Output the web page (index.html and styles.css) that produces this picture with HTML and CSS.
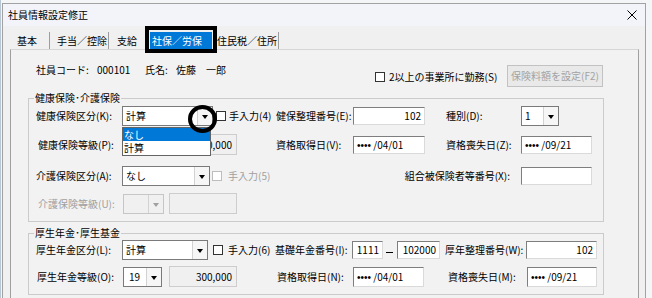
FILE: index.html
```html
<!DOCTYPE html>
<html>
  <head>
    <meta charset="utf-8">
    <meta name="viewport" content="width=device-width, initial-scale=1.0">
    <title>社員情報設定修正</title>
    <link rel="stylesheet" href="styles.css">
  </head>

  <body>
    <div class="window">
      <!-- Title bar -->
      <div class="titlebar">
        <span class="title">社員情報設定修正</span>
        <svg class="close" width="10" height="10" viewBox="0 0 10 10">
          <path d="M0.5 0.5 L9.5 9.5 M9.5 0.5 L0.5 9.5" stroke="#000" stroke-width="1" fill="none"/>
        </svg>
      </div>

      <!-- Tabs -->
      <div class="tabs">
        <div class="tab tab-kihon">基本</div>
        <div class="tab tab-teate">手当／控除</div>
        <div class="tab tab-shikyu">支給</div>
        <div class="tab tab-shaho active">社保／労保<span class="frame"></span></div>
        <div class="tab tab-jumin">住民税／住所</div>
      </div>

      <div class="page">
        <!-- Employee header -->
        <div class="head">
          <div class="emp">
            <span class="emp-code-lbl">社員コード:</span><span class="emp-code">000101</span><span class="emp-name-lbl">氏名:</span><span>佐藤　一郎</span>
          </div>
          <div class="check-wrap"><span class="chk"></span>2以上の事業所に勤務(S)</div>
          <div class="btn disabled">保険料額を設定(F2)</div>
        </div>

        <!-- 健康保険・介護保険 -->
        <fieldset class="group g1">
          <legend>健康保険･介護保険</legend>

          <div class="row r1">
            <span class="lbl">健康保険区分(K):</span>
            <div class="combo w91"><span class="val">計算</span><span class="arrow"></span>
              <div class="popup">
                <div class="opt sel">なし</div>
                <div class="opt">計算</div>
              </div>
              <span class="ring"></span>
            </div>
            <span class="chk ml3"></span>
            <span class="chk-lbl ml3">手入力(4)</span>
            <span class="lbl w77">健保整理番号(E):</span>
            <div class="field w72 num">102</div>
            <span class="lbl w75 ml21">種別(D):</span>
            <div class="combo w38"><span class="val">1</span><span class="arrow"></span></div>
          </div>

          <div class="row r2">
            <span class="lbl ind2">健康保険等級(P):</span>
            <div class="combo w41"><span class="val"></span><span class="arrow"></span></div>
            <div class="box w68 ml6">300,000</div>
            <span class="lbl w77 ml39">資格取得日(V):</span>
            <div class="field w72"><span class="dots">••••</span> /04/01</div>
            <span class="lbl w75 ml21">資格喪失日(Z):</span>
            <div class="field w71"><span class="dots">••••</span> /09/21</div>
          </div>

          <div class="row r3">
            <span class="lbl">介護保険区分(A):</span>
            <div class="combo w88"><span class="val">なし</span><span class="arrow"></span></div>
            <span class="chk ml2 off"></span>
            <span class="chk-lbl ml6 off">手入力(5)</span>
            <span class="lbl lbl-right">組合被保険者等番号(X):</span>
            <div class="field w71"></div>
          </div>

          <div class="row r4">
            <span class="lbl ind2 off">介護保険等級(U):</span>
            <div class="combo w41 ml1 off"><span class="val"></span><span class="arrow"></span></div>
            <div class="box w68 ml5"></div>
          </div>
        </fieldset>

        <!-- 厚生年金・厚生基金 -->
        <fieldset class="group g2">
          <legend>厚生年金･厚生基金</legend>

          <div class="row r1">
            <span class="lbl">厚生年金区分(L):</span>
            <div class="combo w86"><span class="val">計算</span><span class="arrow"></span></div>
            <span class="chk ml5"></span>
            <span class="chk-lbl ml5">手入力(6)</span>
            <span class="lbl w77">基礎年金番号(I):</span>
            <div class="field w31 num">1111</div>
            <span class="dash"></span>
            <div class="field w43 num">102000</div>
            <span class="lbl w81 ml5">厚年整理番号(W):</span>
            <div class="field w71 num">102</div>
          </div>

          <div class="row r2">
            <span class="lbl ind1">厚生年金等級(O):</span>
            <div class="combo w39"><span class="val val-19">19</span><span class="arrow"></span></div>
            <div class="box w68 ml7">300,000</div>
            <span class="lbl w76 ml40">資格取得日(N):</span>
            <div class="field w71"><span class="dots">••••</span> /04/01</div>
            <span class="lbl w79 ml24">資格喪失日(M):</span>
            <div class="field w70"><span class="dots">••••</span> /09/21</div>
          </div>
        </fieldset>
      </div>
    </div>
  </body>
</html>
```

FILE: styles.css
```css
/* Base */
html, body {
  margin: 0;
  overflow: hidden;
}

body {
  background: #f4f5f7;
  border-left: 1px solid #b9c6d3;
  font-family: "Noto Sans CJK JP", "Noto Sans", sans-serif;
  font-size: 10px;
  line-height: 12px;
  color: #000;
}

/* Window frame */
.window {
  margin: 3px 0 0 1px;
  width: 642px;
  height: 300px;
  border: 1px solid #a2a2a2;
  border-bottom: none;
  background: #f0f0f0;
}

.titlebar {
  display: flex;
  align-items: center;
  height: 22px;
  padding-left: 5px;
  background: #f2f4f9;
}

.close {
  margin-left: auto;
  margin-right: 8px;
}

/* Tabs */
.tabs {
  display: flex;
  height: 17px;
  margin-top: 6px;
  padding-left: 9px;
}

.tab {
  box-sizing: border-box;
  height: 17px;
  padding-top: 2px;
  line-height: 14px;
  border-right: 1px solid #9c9c9c;
}

.tab-kihon { width: 38px; padding-left: 5px; }
.tab-teate { width: 59px; padding-left: 7px; }
.tab-shikyu { width: 39px; padding-left: 8px; border-right: none; }
.tab-jumin { width: 67px; padding-left: 5px; }

.tab.active {
  position: relative;
  width: 62px;
  margin-left: 2px;
  padding-left: 2px;
  background: #0078d7;
  color: #fff;
  border-right: none;
}

/* annotation frame around the active tab */
.frame {
  position: absolute;
  left: -5px;
  top: -6px;
  width: 72px;
  height: 27px;
  box-sizing: border-box;
  border: 4px solid #000;
}

/* Tab page */
.page {
  box-sizing: border-box;
  width: 629px;
  height: 260px;
  margin-left: 7px;
  padding-left: 17px;
  background: #f2f2f2;
  border: 1px solid #9f9f9f;
  border-top-color: #d6d6d6;
}

.head {
  display: grid;
  grid-template-columns: 347px 132px 96px;
  height: 22px;
  margin-top: 15px;
}

.emp {
  padding-left: 8px;
  margin-top: -1px;
}

.emp span {
  display: inline-block;
}

.emp-code-lbl { width: 61px; }
.emp-code { width: 48px; }
.emp-name-lbl { width: 31px; }

.check-wrap {
  display: flex;
  align-items: center;
  padding-top: 1px;
}

.check-wrap .chk {
  margin-right: 4px;
}

.btn {
  box-sizing: border-box;
  height: 22px;
  line-height: 20px;
  text-align: center;
  border: 1px solid #c2c2c2;
  background: #e9e9e9;
}

.btn.disabled {
  color: #a3a3a3;
}

/* Group boxes */
.group {
  box-sizing: border-box;
  width: 576px;
  min-inline-size: 0;
  margin: 5px 0 0;
  padding: 1px 11px 7px 7px;
  border: 1px solid #cbcbcb;
}

.group legend {
  margin-left: -2px;
  padding: 0 1px;
  line-height: 12px;
}

.g2 {
  margin-top: 5px;
}

.row {
  display: flex;
  align-items: center;
  height: 21px;
}

.row > * {
  flex-shrink: 0;
}

.g1 .r2 { margin-top: 8px; }
.g1 .r3 { margin-top: 10px; }
.g1 .r4 { margin-top: 7px; }
.g2 .r1 { height: 20px; }
.g2 .r2 { margin-top: 6px; }

/* Labels */
.lbl {
  box-sizing: border-box;
  width: 86px;
  white-space: nowrap;
}

.lbl.ind1 { width: 87px; padding-left: 1px; }
.lbl.ind2 { padding-left: 2px; }

.lbl-right {
  flex: 1;
  text-align: right;
  padding-right: 11px;
}

.off {
  color: #a0a0a0;
}

/* Combo boxes */
.combo {
  position: relative;
  box-sizing: border-box;
  display: flex;
  height: 20px;
  background: #fff;
  border: 1px solid #7a7a7a;
}

.combo .val {
  flex: 1;
  padding-left: 3px;
  line-height: 17px;
}

.combo .val-19 {
  padding-left: 5px;
}

.combo .arrow {
  position: relative;
  width: 14px;
  background: #f6f6f6;
  border-left: 1px solid #d2d2d2;
}

.combo .arrow::after {
  content: "";
  position: absolute;
  left: 4px;
  top: 8px;
  border-left: 3px solid transparent;
  border-right: 3px solid transparent;
  border-top: 4px solid #000;
}

.combo.off {
  background: #f0f0f0;
  border-color: #c6c6c6;
}

.combo.off .arrow {
  background: #f0f0f0;
}

.combo.off .arrow::after {
  border-top-color: #a0a0a0;
}

/* open drop-down list */
.popup {
  position: absolute;
  left: -1px;
  top: 20px;
  z-index: 2;
  width: 89px;
  box-sizing: border-box;
  padding-bottom: 1px;
  background: #fff;
  border: 1px solid #646464;
}

.opt {
  height: 13px;
  padding-left: 1px;
  line-height: 13px;
}

.opt.sel {
  background: #0078d7;
  color: #fff;
}

/* annotation circle around the drop-down arrow */
.ring {
  position: absolute;
  left: 65px;
  top: -2px;
  z-index: 3;
  width: 29px;
  height: 28px;
  box-sizing: border-box;
  border: 4px solid #000;
  border-radius: 50%;
}

/* Check boxes */
.chk {
  display: inline-block;
  box-sizing: border-box;
  width: 10px;
  height: 10px;
  background: #fff;
  border: 1px solid #333;
}

.chk.off {
  border-color: #bdbdbd;
}

.chk-lbl {
  width: 47px;
  white-space: nowrap;
}

/* Edit fields */
.field {
  box-sizing: border-box;
  height: 18px;
  padding: 0 3px;
  line-height: 15px;
  background: #fff;
  border: 1px solid #dadada;
  border-top-color: #7e7e7e;
  border-left-color: #7e7e7e;
  white-space: nowrap;
}

.g2 .r2 .field {
  height: 20px;
  line-height: 17px;
}

.num {
  text-align: right;
}

.dots {
  font-family: "Liberation Sans", sans-serif;
  font-size: 10px;
}

.box {
  box-sizing: border-box;
  height: 21px;
  padding-right: 4px;
  line-height: 19px;
  text-align: right;
  background: #f0f0f0;
  border: 1px solid #cdcdcd;
}

.dash {
  width: 7px;
  height: 1px;
  margin: 5px 4px 0 3px;
  background: #000;
}

/* widths and gaps */
.w31 { width: 31px; }
.w38 { width: 38px; }
.w39 { width: 39px; }
.w41 { width: 41px; }
.w43 { width: 43px; }
.w68 { width: 68px; }
.w70 { width: 70px; }
.w71 { width: 71px; }
.w72 { width: 72px; }
.w75 { width: 75px; }
.w76 { width: 76px; }
.w77 { width: 77px; }
.w79 { width: 79px; }
.w81 { width: 81px; }
.w86 { width: 86px; }
.w88 { width: 88px; }
.w91 { width: 91px; }

.ml1 { margin-left: 1px; }
.ml2 { margin-left: 2px; }
.ml3 { margin-left: 3px; }
.ml5 { margin-left: 5px; }
.ml6 { margin-left: 6px; }
.ml7 { margin-left: 7px; }
.ml21 { margin-left: 21px; }
.ml24 { margin-left: 24px; }
.ml39 { margin-left: 39px; }
.ml40 { margin-left: 40px; }
```
